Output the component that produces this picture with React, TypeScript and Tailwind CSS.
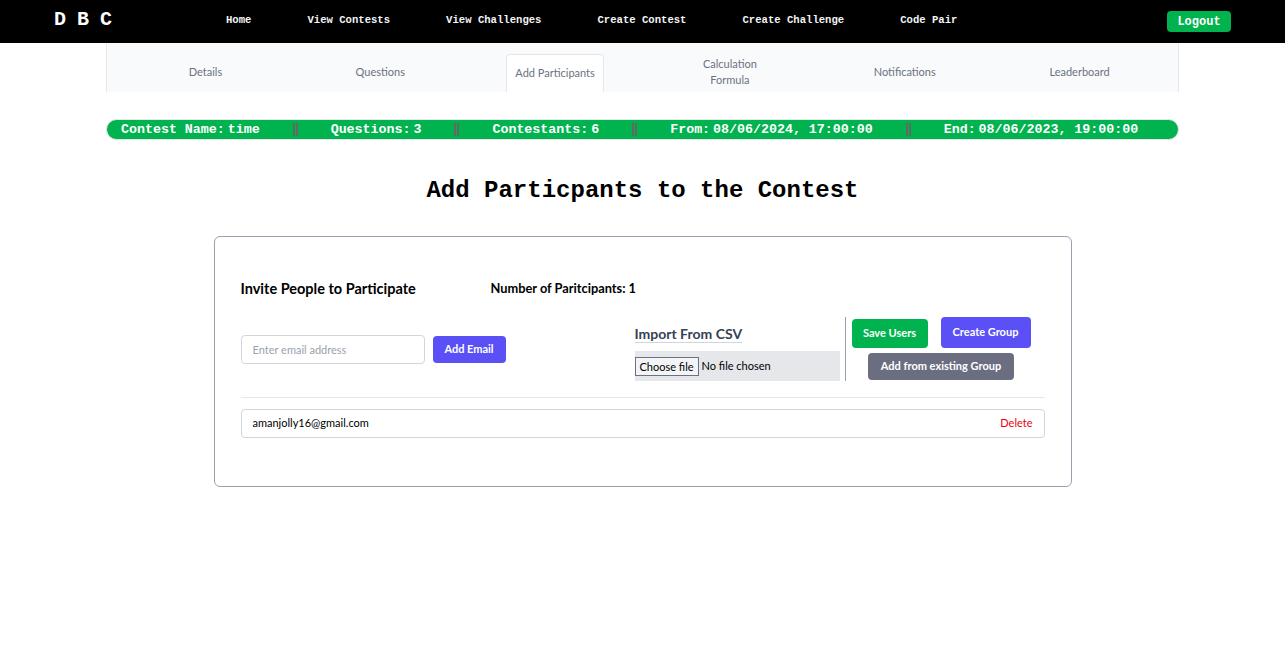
import { useState } from 'react';

const navLinks = ['Home', 'View Contests', 'View Challenges', 'Create Contest', 'Create Challenge', 'Code Pair'];
const tabs = ['Details', 'Questions', 'Add Participants', 'Calculation Formula', 'Notifications', 'Leaderboard'];

const mono = { fontFamily: '"Liberation Mono", monospace' };

export default function App() {
  const [active, setActive] = useState('Add Participants');
  const [emails, setEmails] = useState(['amanjolly16@gmail.com']);
  const [email, setEmail] = useState('');

  const stats = [
    ['Contest Name:', 'time'],
    ['Questions:', '3'],
    ['Contestants:', '6'],
    ['From:', '08/06/2024, 17:00:00'],
    ['End:', '08/06/2023, 19:00:00'],
  ];

  return (
    <div className="min-h-screen bg-white" style={{ fontFamily: 'Lato, "Noto Sans", sans-serif' }}>
      {/* top nav */}
      <nav className="h-[43px] bg-black flex items-center">
        <div className="w-[215px] pl-[54px] text-white font-bold text-[20px] tracking-[0.55em] -mt-[3px]" style={mono}>
          DBC
        </div>
        <div className="flex items-center gap-[56px] text-[10.6px] font-bold text-gray-100 pl-[11px] -mt-[2px]" style={mono}>
          {navLinks.map((l) => (
            <a key={l} href="#" className="hover:text-gray-300">
              {l}
            </a>
          ))}
        </div>
        <button
          className="ml-auto mr-[54px] h-[21px] w-[64px] rounded bg-[#00b34f] text-white text-[12px] font-bold"
          style={mono}
        >
          Logout
        </button>
      </nav>

      {/* tabs */}
      <div className="mx-[106px] h-[49px] bg-[#f9fafb] border-x border-gray-200 grid grid-cols-6 px-[11px] items-end">
        {tabs.map((t) => (
          <div key={t} className="flex justify-center h-full items-end">
            <button
              onClick={() => setActive(t)}
              className={`h-[38px] px-2 pb-[2px] text-[11px] leading-4 text-gray-500 rounded-t ${
                active === t ? 'bg-white border border-b-0 border-gray-200' : 'max-w-[80px]'
              }`}
            >
              {t}
            </button>
          </div>
        ))}
      </div>

      {/* stats bar */}
      <div
        className="mx-[106px] mt-[27px] h-[21px] rounded-full bg-[#00b34f] border border-gray-200 flex items-center pl-[14px] text-white font-bold text-[13.3px]"
        style={mono}
      >
        {stats.map(([k, v], i) => (
          <div key={k} className="flex items-center">
            {i > 0 && <div className="mx-[33px] w-[5px] h-[13px] border-x-2 border-[#5d6b62]" />}
            <span>{k}</span>
            <span className="ml-[3px]">{v}</span>
          </div>
        ))}
      </div>

      <h1 className="mt-[33px] text-center text-[24px] font-bold text-black" style={mono}>
        Add Particpants to the Contest
      </h1>

      {/* card */}
      <div className="mx-auto mt-[27px] w-[858px] h-[251px] border border-gray-400 rounded-md px-[26px] pt-[42px]">
        <div className="flex items-center font-bold text-black h-[20px]">
          <span className="w-[250px] text-[14.5px]">Invite People to Participate</span>
          <span className="text-[12.8px]">Number of Paritcipants: 1</span>
        </div>

        <div className="flex items-center mt-[18px] h-[64px]">
          <input
            value={email}
            onChange={(e) => setEmail(e.target.value)}
            placeholder="Enter email address"
            className="w-[184px] h-[29px] border border-gray-300 rounded-sm px-[11px] text-[11px] placeholder:text-gray-400 outline-none"
          />
          <button
            onClick={() => {
              if (email) {
                setEmails([...emails, email]);
                setEmail('');
              }
            }}
            className="ml-2 h-[27px] w-[73px] rounded-sm bg-[#5a50f5] text-white text-[11px] font-bold"
          >
            Add Email
          </button>

          <div className="ml-[129px] w-[205px] self-end">
            <div className="inline-block text-[14px] font-bold text-gray-700 border-b border-gray-300 leading-[17px]">
              Import From CSV
            </div>
            <div className="mt-[6px] h-[30px] bg-gray-200 flex items-center text-[11px] text-black">
              <span className="border border-gray-500 bg-gray-100 px-[4px] h-[19px] leading-[17px]">Choose file</span>
              <span className="ml-[3px]">No file chosen</span>
            </div>
          </div>

          <div className="ml-[5px] w-px h-[64px] bg-gray-400" />

          <div className="ml-[6px] flex flex-col items-center h-[64px]">
            <div className="flex items-start gap-[13px]">
              <button className="mt-[2px] h-[29px] w-[76px] rounded bg-[#00b34f] text-white text-[11px] font-bold">
                Save Users
              </button>
              <button className="h-[31px] w-[90px] rounded bg-[#5a50f5] text-white text-[11px] font-bold">
                Create Group
              </button>
            </div>
            <button className="mt-[5px] h-[27px] w-[146px] rounded bg-[#6b6e80] text-white text-[11px] font-bold">
              Add from existing Group
            </button>
          </div>
        </div>

        <div className="mt-[16px] border-t border-gray-200" />

        <div className="mt-[11px] flex flex-col gap-2">
          {emails.map((e) => (
            <div key={e} className="h-[29px] border border-gray-300 rounded-sm flex items-center justify-between px-[11px] text-[11px]">
              <span className="text-black">{e}</span>
              <button onClick={() => setEmails(emails.filter((x) => x !== e))} className="text-red-600">
                Delete
              </button>
            </div>
          ))}
        </div>
      </div>
    </div>
  );
}
